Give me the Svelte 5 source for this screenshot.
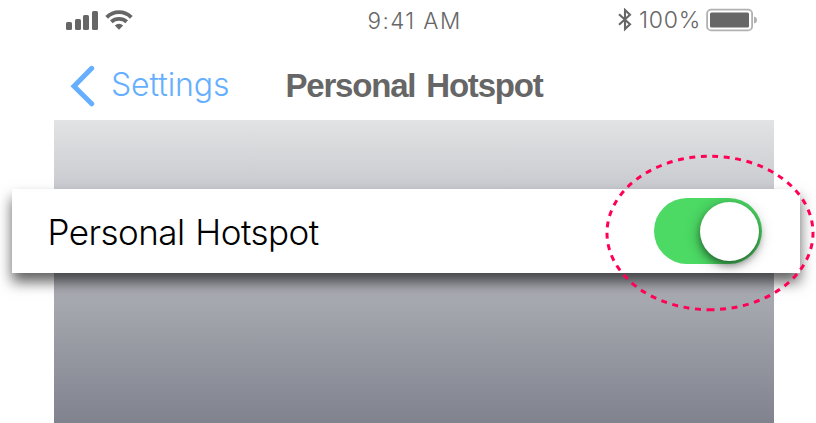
<script>
  let enabled = $state(true);
  const bars = [8, 11, 15, 19];
</script>

<main>
  <header class="status">
    <div class="signal">
      <div class="bars">
        {#each bars as height}
          <i style="height: {height}px"></i>
        {/each}
      </div>
      <svg class="wifi" width="28" height="20" viewBox="0 0 28 20">
        <g fill="none" stroke="#666" stroke-width="3.9">
          <path d="M1.7 7.3C8.5 .4 19.5 .4 26.3 7.3" />
          <path d="M6.3 11.8C10.5 7.9 17.5 7.9 21.7 11.8" />
        </g>
        <path fill="#666" d="M9.8 15.5Q14 12.2 18.2 15.5L14 19.7Z" />
      </svg>
    </div>
    <span class="time">9:41 AM</span>
    <div class="power">
      <svg class="bluetooth" width="14" height="24" viewBox="0 0 14 24">
        <path d="M1 6.2L12 16.2L7 21V2L12 6.8L1 16.8" fill="none" stroke="#666" stroke-width="2.1" />
      </svg>
      <span class="percent">100%</span>
      <svg class="battery" width="52" height="24" viewBox="0 0 52 24">
        <rect x="1.1" y="1.6" width="45" height="20.8" rx="4" fill="#fff" stroke="#b1b1b1" stroke-width="1.8" />
        <rect x="4" y="4.5" width="39" height="15" rx="1.5" fill="#666" />
        <path d="M48 8.5Q51 9 51 12T48 15.5Z" fill="#b1b1b1" />
      </svg>
    </div>
  </header>

  <nav>
    <button class="back">
      <svg width="26" height="42" viewBox="0 0 26 42">
        <path d="M21.7 3.3L4 21.2L21.7 38.8" fill="none" stroke="#66afff" stroke-width="5" stroke-linecap="round" stroke-linejoin="miter" />
      </svg>
      <span>Settings</span>
    </button>
    <h1>Personal Hotspot</h1>
  </nav>

  <section>
    <div class="row">
      <span class="label">Personal Hotspot</span>
      <button class="switch" class:on={enabled} role="switch" aria-checked={enabled} aria-label="Personal Hotspot" onclick={() => (enabled = !enabled)}>
        <i></i>
      </button>
    </div>
  </section>

  <svg class="highlight" width="212" height="160" viewBox="0 0 212 160">
    <path d="M106 156.7A103 76.7 0 0 1 106 3.3A103 76.7 0 0 1 106 156.7" fill="none" stroke="#ff0055" stroke-width="3" stroke-dasharray="5.9 5.62" stroke-dashoffset="2.3" />
  </svg>
</main>

<style>
  :global(body) { background: #fff; overflow: hidden; }
  main {
    position: relative;
    width: 816px;
    height: 423px;
    overflow: hidden;
    display: flex;
    flex-direction: column;
    background: #fff;
    font-family: Inter, "Liberation Sans", sans-serif;
    white-space: nowrap;
  }
  .status {
    height: 40px;
    display: grid;
    grid-template-columns: 301.5px 1fr 143px;
    padding: 0 58px 0 66px;
    box-sizing: border-box;
    align-items: center;
    color: #666;
  }
  .signal { display: flex; align-items: flex-end; gap: 7px; }
  .bars { display: flex; align-items: flex-end; gap: 2.7px; height: 20px; }
  .bars i { width: 6px; background: #666; border-radius: 1.5px; }
  .wifi { display: block; }
  .time { font-size: 22.5px; letter-spacing: 1.4px; font-weight: 360; line-height: 30px; padding-top: 2px; }
  .power { display: flex; align-items: center; justify-content: flex-end; }
  .bluetooth { margin-right: 7px; }
  .percent { font-size: 23px; letter-spacing: .8px; font-weight: 360; width: 62px; margin-right: 5px; }
  nav {
    height: 80px;
    display: flex;
    align-items: center;
    padding: 0 0 0 70px;
  }
  button { border: 0; padding: 0; margin: 0; font: inherit; background: none; }
  .back {
    display: flex;
    align-items: center;
    width: 215.5px;
    gap: 15px;
    color: #66afff;
    font-size: 32px;
    font-weight: 350;
    letter-spacing: -.1px;
    padding-bottom: 0;
    padding-top: 11px;
  }
  .back svg { flex: none; }
  .back span { padding-bottom: 2px; }
  h1 {
    margin: 12px 0 0;
    font: 700 33px/40px "Liberation Sans", Arial, sans-serif;
    letter-spacing: -1.2px;
    word-spacing: 3px;
    color: #666;
  }
  section {
    width: 720px;
    height: 303px;
    margin-left: 54px;
    padding-top: 69px;
    box-sizing: border-box;
    background: linear-gradient(#e2e3e4, #c9cacf 23%, #a7a9b0 59%, #80828e);
  }
  .row {
    width: 787.5px;
    height: 84px;
    margin-left: -42px;
    padding: 0 37.5px 0 35.5px;
    box-sizing: border-box;
    display: flex;
    align-items: center;
    justify-content: space-between;
    background: #fff;
    box-shadow: 0 9px 13px rgba(0, 0, 0, .62);
  }
  .label { font-size: 35px; font-weight: 350; letter-spacing: -.55px; word-spacing: 1.5px; color: #000; padding-top: 1px; }
  .switch {
    width: 108px;
    height: 66px;
    border-radius: 33px;
    padding: 0 3px;
    display: flex;
    align-items: center;
    background: #ddd;
  }
  .switch.on { background: #4cd964; justify-content: flex-end; }
  .switch i {
    width: 59px;
    height: 59px;
    border-radius: 50%;
    background: #fff;
    box-shadow: 0 4px 8px rgba(0, 0, 0, .5), 0 3px 18px rgba(0, 0, 0, .16);
  }
  .highlight { position: absolute; left: 603.6px; top: 152.5px; pointer-events: none; }
</style>
